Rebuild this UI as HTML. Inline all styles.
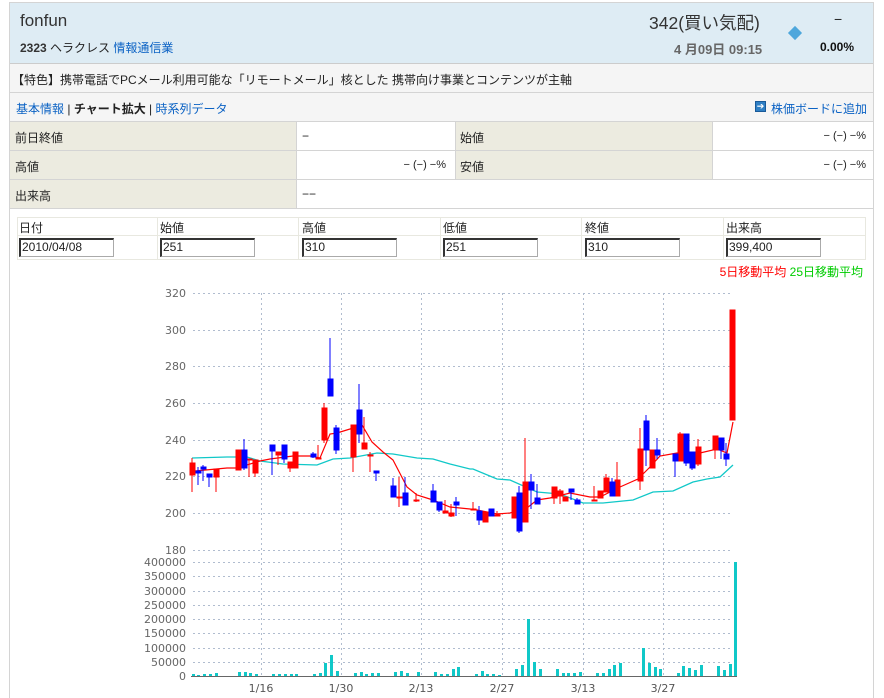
<!DOCTYPE html>
<html><head><meta charset="utf-8">
<style>
*{margin:0;padding:0;box-sizing:border-box}
html,body{width:884px;height:698px;overflow:hidden}
body{background:#fff;font-family:"Liberation Sans","Noto Sans CJK JP",sans-serif;font-size:12px;color:#222;position:relative}
.a{position:absolute}
.blue{color:#0b62c4}
.lab{background:#ecebe0}
</style></head><body>
<div class="a" style="left:9px;top:2px;width:865px;height:696px;border:1px solid #d4d4d4;border-bottom:none"></div>
<div class="a" style="left:10px;top:3px;width:863px;height:61px;background:#deecf4;border-bottom:1px solid #ccc"></div>
<div class="a" style="left:20px;top:11px;font-size:17px;color:#333">fonfun</div>
<div class="a" style="left:20px;top:39px;font-size:12px"><b style="color:#333">2323</b> ヘラクレス <span class="blue">情報通信業</span></div>
<div class="a" style="left:649px;top:10px;font-size:17.5px;color:#333">342(買い気配)</div>
<div class="a" style="left:674px;top:39px;font-size:13px;color:#666;font-weight:bold">4 月09日 09:15</div>
<div class="a" style="left:790px;top:28px;width:10px;height:10px;background:#4ea7dc;transform:rotate(45deg)"></div>
<div class="a" style="left:834px;top:11px;font-size:14px;color:#222">−</div>
<div class="a" style="left:820px;top:40px;font-size:12px;font-weight:bold;color:#111">0.00%</div>
<div class="a" style="left:10px;top:64px;width:863px;height:29px;background:#f5f5f5;border-bottom:1px solid #d4d4d4"></div>
<div class="a" style="left:12px;top:71px;font-size:12px">【特色】携帯電話でPCメール利用可能な「リモートメール」核とした 携帯向け事業とコンテンツが主軸</div>
<div class="a" style="left:10px;top:93px;width:863px;height:29px;background:#f5f5f5;border-bottom:1px solid #d4d4d4"></div>
<div class="a" style="left:16px;top:100px"><span class="blue">基本情報</span> | <b>チャート拡大</b> | <span class="blue">時系列データ</span></div>
<div class="a" style="left:755px;top:101px;width:11px;height:11px;background:#2f7fc4;border:1px solid #195a99;color:#fff;font-size:9px;line-height:9px;text-align:center">➔</div>
<div class="a blue" style="left:771px;top:100px">株価ボードに追加</div>
<div class="a lab" style="left:10px;top:122px;width:287px;height:29px;border-bottom:1px solid #d4d4d4;border-right:1px solid #d4d4d4"></div>
<div class="a lab" style="left:455px;top:122px;width:258px;height:29px;border-bottom:1px solid #d4d4d4;border-right:1px solid #d4d4d4;border-left:1px solid #d4d4d4"></div>
<div class="a lab" style="left:10px;top:151px;width:287px;height:29px;border-bottom:1px solid #d4d4d4;border-right:1px solid #d4d4d4"></div>
<div class="a lab" style="left:455px;top:151px;width:258px;height:29px;border-bottom:1px solid #d4d4d4;border-right:1px solid #d4d4d4;border-left:1px solid #d4d4d4"></div>
<div class="a lab" style="left:10px;top:180px;width:287px;height:29px;border-bottom:1px solid #d4d4d4;border-right:1px solid #d4d4d4"></div>
<div class="a" style="left:297px;top:150px;width:576px;height:1px;background:#d4d4d4"></div>
<div class="a" style="left:297px;top:179px;width:576px;height:1px;background:#d4d4d4"></div>
<div class="a" style="left:297px;top:208px;width:576px;height:1px;background:#d4d4d4"></div>
<div class="a" style="left:15px;top:129px">前日終値</div>
<div class="a" style="left:302px;top:129px">−</div>
<div class="a" style="left:460px;top:129px">始値</div>
<div class="a" style="left:820px;top:130px;font-size:11px;width:46px;text-align:right">− (−) −%</div>
<div class="a" style="left:15px;top:158px">高値</div>
<div class="a" style="left:400px;top:159px;font-size:11px;width:46px;text-align:right">− (−) −%</div>
<div class="a" style="left:460px;top:158px">安値</div>
<div class="a" style="left:820px;top:159px;font-size:11px;width:46px;text-align:right">− (−) −%</div>
<div class="a" style="left:15px;top:187px">出来高</div>
<div class="a" style="left:302px;top:187px">−−</div>
<div class="a" style="left:17px;top:217px;width:849px;height:43px;border:1px solid #e8e8e0"></div>
<div class="a" style="left:17px;top:235px;width:849px;height:1px;background:#e8e8e0"></div>
<div class="a" style="left:157px;top:217px;width:1px;height:43px;background:#e8e8e0"></div>
<div class="a" style="left:298px;top:217px;width:1px;height:43px;background:#e8e8e0"></div>
<div class="a" style="left:440px;top:217px;width:1px;height:43px;background:#e8e8e0"></div>
<div class="a" style="left:581px;top:217px;width:1px;height:43px;background:#e8e8e0"></div>
<div class="a" style="left:723px;top:217px;width:1px;height:43px;background:#e8e8e0"></div>
<div class="a" style="left:19px;top:219px">日付</div>
<div class="a" style="left:160px;top:219px">始値</div>
<div class="a" style="left:302px;top:219px">高値</div>
<div class="a" style="left:443px;top:219px">低値</div>
<div class="a" style="left:585px;top:219px">終値</div>
<div class="a" style="left:726px;top:219px">出来高</div>
<div class="a" style="left:19px;top:238px;width:95px;height:19px;border:1px solid #aaa;border-top:2px solid #333;border-left:2px solid #333;padding-left:1px;line-height:15px">2010/04/08</div>
<div class="a" style="left:160px;top:238px;width:95px;height:19px;border:1px solid #aaa;border-top:2px solid #333;border-left:2px solid #333;padding-left:1px;line-height:15px">251</div>
<div class="a" style="left:302px;top:238px;width:95px;height:19px;border:1px solid #aaa;border-top:2px solid #333;border-left:2px solid #333;padding-left:1px;line-height:15px">310</div>
<div class="a" style="left:443px;top:238px;width:95px;height:19px;border:1px solid #aaa;border-top:2px solid #333;border-left:2px solid #333;padding-left:1px;line-height:15px">251</div>
<div class="a" style="left:585px;top:238px;width:95px;height:19px;border:1px solid #aaa;border-top:2px solid #333;border-left:2px solid #333;padding-left:1px;line-height:15px">310</div>
<div class="a" style="left:726px;top:238px;width:95px;height:19px;border:1px solid #aaa;border-top:2px solid #333;border-left:2px solid #333;padding-left:1px;line-height:15px">399,400</div>
<div class="a" style="left:705px;top:263px;width:158px;text-align:right"><span style="color:#f00">5日移動平均</span> <span style="color:#0c0">25日移動平均</span></div>

<svg class="a" style="left:0;top:0" width="884" height="698" font-family="DejaVu Sans, Liberation Sans, sans-serif" font-size="11">
<g stroke="#b0bccf" stroke-dasharray="2,3" stroke-width="1">
<line x1="193" x2="733" y1="293.5" y2="293.5"/><line x1="193" x2="733" y1="330.5" y2="330.5"/><line x1="193" x2="733" y1="366.5" y2="366.5"/><line x1="193" x2="733" y1="403.5" y2="403.5"/><line x1="193" x2="733" y1="440.5" y2="440.5"/><line x1="193" x2="733" y1="476.5" y2="476.5"/><line x1="193" x2="733" y1="513.5" y2="513.5"/><line x1="193" x2="733" y1="550.5" y2="550.5"/>
<line x1="193" x2="733" y1="562.5" y2="562.5"/><line x1="193" x2="733" y1="576.5" y2="576.5"/><line x1="193" x2="733" y1="591.5" y2="591.5"/><line x1="193" x2="733" y1="605.5" y2="605.5"/><line x1="193" x2="733" y1="619.5" y2="619.5"/><line x1="193" x2="733" y1="633.5" y2="633.5"/><line x1="193" x2="733" y1="648.5" y2="648.5"/><line x1="193" x2="733" y1="662.5" y2="662.5"/>
<line x1="261.5" x2="261.5" y1="293" y2="676"/><line x1="341.5" x2="341.5" y1="293" y2="676"/><line x1="421.5" x2="421.5" y1="293" y2="676"/><line x1="502.5" x2="502.5" y1="293" y2="676"/><line x1="583.5" x2="583.5" y1="293" y2="676"/><line x1="663.5" x2="663.5" y1="293" y2="676"/>
</g>
<line x1="191" x2="737" y1="676.5" y2="676.5" stroke="#666"/>
<g fill="#666" text-anchor="end">
<text x="186" y="297">320</text><text x="186" y="334">300</text><text x="186" y="370">280</text><text x="186" y="407">260</text><text x="186" y="444">240</text><text x="186" y="480">220</text><text x="186" y="517">200</text><text x="186" y="554">180</text>
<text x="186" y="566">400000</text><text x="186" y="580">350000</text><text x="186" y="595">300000</text><text x="186" y="609">250000</text><text x="186" y="623">200000</text><text x="186" y="637">150000</text><text x="186" y="652">100000</text><text x="186" y="666">50000</text><text x="186" y="680">0</text>
</g>
<g fill="#555" text-anchor="middle"><text x="261" y="692">1/16</text><text x="341" y="692">1/30</text><text x="421" y="692">2/13</text><text x="502" y="692">2/27</text><text x="583" y="692">3/13</text><text x="663" y="692">3/27</text></g>
<polyline fill="none" stroke="#10c8c8" stroke-width="1.3" points="192,458 227,457 247,457 260,461 283,464 317,465 333,459 350,458 377,453 393,454 417,458 433,459 450,464 470,469 473,469 497,479 510,480 537,492 560,494 583,503 603,503 633,500 653,492 673,491 693,482 707,479 720,477 733,465"/>
<polyline fill="none" stroke="#f00" stroke-width="1.2" points="195,471 227,468 237,468 260,461 270,459 293,456 310,456 320,458 330,434 337,433 350,429 362,425 372,442 383,452 393,460 407,487 417,495 433,500 450,507 470,509 477,510 497,514 510,513 527,508 537,500 550,498 570,493 590,497 600,497 620,487 638,479 650,467 660,456 677,453 700,453 717,449 727,453 733,422"/>
<g stroke-width="1">
<g fill="#f00" stroke="#f00">
<line x1="192" x2="192" y1="458" y2="492"/><rect x="190" y="463" width="5" height="12"/>
<line x1="216" x2="216" y1="469" y2="492"/><rect x="214" y="469" width="5" height="8"/>
<rect x="236" y="450" width="5" height="20"/>
<line x1="249" x2="249" y1="459" y2="477"/><rect x="247" y="459" width="5" height="1"/>
<line x1="255" x2="255" y1="460" y2="477"/><rect x="253" y="460" width="5" height="13"/>
<line x1="278" x2="278" y1="452" y2="465"/><rect x="276" y="452" width="5" height="3"/>
<line x1="290" x2="290" y1="462" y2="472"/><rect x="288" y="462" width="5" height="6"/>
<rect x="293" y="452" width="5" height="16"/>
<line x1="318" x2="318" y1="445" y2="459"/><rect x="316" y="458" width="5" height="1"/>
<line x1="324" x2="324" y1="403" y2="443"/><rect x="322" y="408" width="5" height="32"/>
<line x1="353" x2="353" y1="425" y2="472"/><rect x="351" y="425" width="5" height="32"/>
<line x1="364" x2="364" y1="417" y2="449"/><rect x="362" y="443" width="5" height="6"/>
<line x1="370" x2="370" y1="452" y2="472"/><rect x="368" y="455" width="5" height="1"/>
<line x1="399" x2="399" y1="477" y2="507"/><rect x="397" y="497" width="5" height="1"/>
<line x1="416" x2="416" y1="493" y2="502"/><rect x="414" y="500" width="5" height="1"/>
<line x1="445" x2="445" y1="500" y2="513"/><rect x="443" y="511" width="5" height="2"/>
<line x1="451" x2="451" y1="504" y2="517"/><rect x="449" y="513" width="5" height="3"/>
<line x1="473" x2="473" y1="502" y2="510"/><rect x="471" y="509" width="5" height="1"/>
<rect x="483" y="512" width="5" height="10"/>
<line x1="497" x2="497" y1="511" y2="515"/><rect x="495" y="515" width="5" height="1"/>
<rect x="512" y="497" width="5" height="21"/>
<line x1="525" x2="525" y1="438" y2="522"/><rect x="523" y="482" width="5" height="40"/>
<line x1="554" x2="554" y1="487" y2="504"/><rect x="552" y="487" width="5" height="11"/>
<line x1="560" x2="560" y1="489" y2="504"/><rect x="558" y="491" width="5" height="5"/>
<rect x="563" y="497" width="5" height="4"/>
<line x1="594" x2="594" y1="486" y2="501"/><rect x="592" y="500" width="5" height="1"/>
<rect x="598" y="491" width="5" height="7"/>
<line x1="606" x2="606" y1="474" y2="492"/><rect x="604" y="478" width="5" height="14"/>
<line x1="617" x2="617" y1="462" y2="496"/><rect x="615" y="480" width="5" height="16"/>
<line x1="640" x2="640" y1="428" y2="490"/><rect x="638" y="449" width="5" height="32"/>
<rect x="650" y="450" width="5" height="18"/>
<line x1="680" x2="680" y1="432" y2="461"/><rect x="678" y="434" width="5" height="27"/>
<line x1="698" x2="698" y1="439" y2="466"/><rect x="696" y="447" width="5" height="17"/>
<line x1="715" x2="715" y1="436" y2="459"/><rect x="713" y="436" width="5" height="14"/>
<rect x="730" y="310" width="5" height="110"/>
</g>
<g fill="#00f" stroke="#00f">
<line x1="198" x2="198" y1="467" y2="485"/><rect x="196" y="471" width="5" height="2"/>
<line x1="203" x2="203" y1="465" y2="481"/><rect x="201" y="467" width="5" height="2"/>
<line x1="209" x2="209" y1="474" y2="487"/><rect x="207" y="474" width="5" height="3"/>
<line x1="244" x2="244" y1="439" y2="470"/><rect x="242" y="450" width="5" height="18"/>
<line x1="272" x2="272" y1="445" y2="475"/><rect x="270" y="445" width="5" height="6"/>
<line x1="284" x2="284" y1="445" y2="463"/><rect x="282" y="445" width="5" height="14"/>
<line x1="313" x2="313" y1="452" y2="458"/><rect x="311" y="454" width="5" height="3"/>
<line x1="330" x2="330" y1="338" y2="396"/><rect x="328" y="379" width="5" height="17"/>
<line x1="336" x2="336" y1="425" y2="454"/><rect x="334" y="428" width="5" height="22"/>
<line x1="359" x2="359" y1="384" y2="443"/><rect x="357" y="410" width="5" height="24"/>
<line x1="376" x2="376" y1="471" y2="481"/><rect x="374" y="471" width="5" height="2"/>
<line x1="393" x2="393" y1="478" y2="497"/><rect x="391" y="486" width="5" height="11"/>
<line x1="405" x2="405" y1="477" y2="505"/><rect x="403" y="493" width="5" height="12"/>
<line x1="433" x2="433" y1="484" y2="502"/><rect x="431" y="491" width="5" height="11"/>
<line x1="439" x2="439" y1="502" y2="512"/><rect x="437" y="502" width="5" height="8"/>
<line x1="456" x2="456" y1="497" y2="516"/><rect x="454" y="502" width="5" height="3"/>
<line x1="479" x2="479" y1="506" y2="525"/><rect x="477" y="511" width="5" height="9"/>
<rect x="489" y="509" width="5" height="7"/>
<line x1="519" x2="519" y1="486" y2="533"/><rect x="517" y="493" width="5" height="38"/>
<line x1="531" x2="531" y1="474" y2="509"/><rect x="529" y="482" width="5" height="8"/>
<line x1="537" x2="537" y1="484" y2="504"/><rect x="535" y="498" width="5" height="6"/>
<line x1="571" x2="571" y1="489" y2="500"/><rect x="569" y="489" width="5" height="3"/>
<line x1="577" x2="577" y1="498" y2="504"/><rect x="575" y="500" width="5" height="4"/>
<line x1="612" x2="612" y1="478" y2="496"/><rect x="610" y="482" width="5" height="14"/>
<line x1="646" x2="646" y1="415" y2="466"/><rect x="644" y="421" width="5" height="29"/>
<line x1="657" x2="657" y1="438" y2="459"/><rect x="655" y="450" width="5" height="5"/>
<line x1="675" x2="675" y1="454" y2="477"/><rect x="673" y="454" width="5" height="7"/>
<line x1="686" x2="686" y1="434" y2="466"/><rect x="684" y="434" width="5" height="29"/>
<line x1="692" x2="692" y1="452" y2="470"/><rect x="690" y="452" width="5" height="16"/>
<line x1="721" x2="721" y1="438" y2="459"/><rect x="719" y="438" width="5" height="12"/>
<line x1="726" x2="726" y1="443" y2="466"/><rect x="724" y="454" width="5" height="5"/>
</g>
</g>
<g fill="#10c8c8">
<rect x="192" y="674" width="3" height="2"/><rect x="197" y="675" width="3" height="1"/><rect x="203" y="674" width="3" height="2"/><rect x="209" y="674" width="3" height="2"/><rect x="215" y="673" width="3" height="3"/>
<rect x="238" y="672" width="3" height="4"/><rect x="244" y="672" width="3" height="4"/><rect x="249" y="673" width="3" height="3"/><rect x="255" y="674" width="3" height="2"/>
<rect x="272" y="674" width="3" height="2"/><rect x="278" y="674" width="3" height="2"/><rect x="284" y="674" width="3" height="2"/><rect x="290" y="674" width="3" height="2"/><rect x="295" y="674" width="3" height="2"/>
<rect x="313" y="674" width="3" height="2"/><rect x="319" y="673" width="3" height="3"/><rect x="324" y="663" width="3" height="13"/><rect x="330" y="655" width="3" height="21"/><rect x="336" y="671" width="3" height="5"/>
<rect x="354" y="673" width="3" height="3"/><rect x="360" y="672" width="3" height="4"/><rect x="365" y="674" width="3" height="2"/><rect x="371" y="673" width="3" height="3"/><rect x="377" y="673" width="3" height="3"/>
<rect x="394" y="672" width="3" height="4"/><rect x="400" y="671" width="3" height="5"/><rect x="406" y="673" width="3" height="3"/><rect x="417" y="672" width="3" height="4"/>
<rect x="434" y="672" width="3" height="4"/><rect x="440" y="674" width="3" height="2"/><rect x="446" y="674" width="3" height="2"/><rect x="452" y="669" width="3" height="7"/><rect x="457" y="667" width="3" height="9"/>
<rect x="475" y="674" width="3" height="2"/><rect x="481" y="671" width="3" height="5"/><rect x="486" y="674" width="3" height="2"/><rect x="492" y="674" width="3" height="2"/><rect x="498" y="675" width="3" height="1"/>
<rect x="515" y="669" width="3" height="7"/><rect x="521" y="665" width="3" height="11"/><rect x="527" y="619" width="3" height="57"/><rect x="533" y="662" width="3" height="14"/><rect x="539" y="669" width="3" height="7"/>
<rect x="556" y="669" width="3" height="7"/><rect x="562" y="673" width="3" height="3"/><rect x="567" y="673" width="3" height="3"/><rect x="573" y="673" width="3" height="3"/><rect x="579" y="672" width="3" height="4"/>
<rect x="596" y="673" width="3" height="3"/><rect x="602" y="673" width="3" height="3"/><rect x="608" y="669" width="3" height="7"/><rect x="613" y="665" width="3" height="11"/><rect x="619" y="663" width="3" height="13"/>
<rect x="642" y="648" width="3" height="28"/><rect x="648" y="663" width="3" height="13"/><rect x="654" y="667" width="3" height="9"/><rect x="659" y="669" width="3" height="7"/>
<rect x="677" y="673" width="3" height="3"/><rect x="682" y="666" width="3" height="10"/><rect x="688" y="668" width="3" height="8"/><rect x="694" y="670" width="3" height="6"/><rect x="700" y="665" width="3" height="11"/>
<rect x="717" y="666" width="3" height="10"/><rect x="723" y="670" width="3" height="6"/><rect x="729" y="664" width="3" height="12"/><rect x="734" y="562" width="3" height="114"/>
</g>
</svg>
</body></html>
